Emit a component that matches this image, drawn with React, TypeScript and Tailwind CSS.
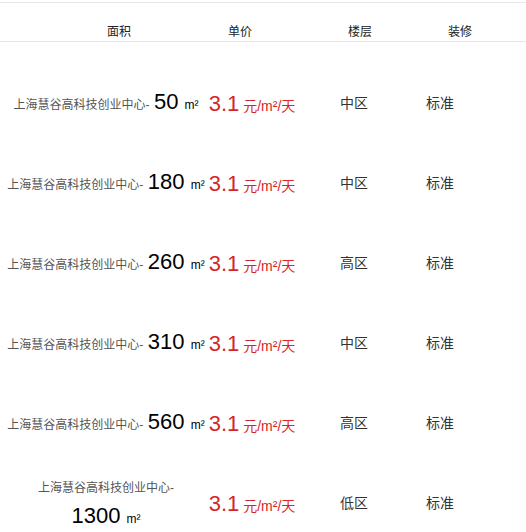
import React from 'react';

interface Room {
  area: string;
  floor: string;
}

const rooms: Room[] = [
  { area: '50', floor: '中区' },
  { area: '180', floor: '中区' },
  { area: '260', floor: '高区' },
  { area: '310', floor: '中区' },
  { area: '560', floor: '高区' },
  { area: '1300', floor: '低区' },
];

const App = () => {
  return (
    <div className="min-h-screen bg-white pt-[2px] font-['Arial','Liberation_Sans','Noto_Sans_CJK_SC',sans-serif]">
      <div className="border-t border-[#e8e8e8]">
        <div className="flex h-[39px] items-center pt-[20px] text-[12px] text-[#222] border-b border-[#e5e5e5]">
          <span className="ml-[107px]">面积</span>
          <span className="ml-[97px]">单价</span>
          <span className="ml-[96px]">楼层</span>
          <span className="ml-[76px]">装修</span>
        </div>

        <div className="pt-[21px]">
          {rooms.map((item) => (
            <div key={item.area} className="flex h-[80px] items-center pl-[6px]">
              <div className="w-[200px] text-center leading-[27px]">
                <span className="text-[12px] text-[#555]">上海慧谷高科技创业中心-</span>{' '}
                <span className="whitespace-nowrap text-[22px] text-black">{item.area} <span className="text-[12px]">m²</span></span>
              </div>
              <div className="w-[92px] whitespace-nowrap text-center text-[#d6262b]">
                <span className="text-[22px]">3.1</span>
                <span className="text-[14px]"> 元/m²/天</span>
              </div>
              <div className="w-[112px] text-center text-[14px] text-[#333]">{item.floor}</div>
              <div className="w-[60px] text-center text-[14px] text-[#333]">标准</div>
            </div>
          ))}
        </div>
      </div>
    </div>
  );
};

export default App;
